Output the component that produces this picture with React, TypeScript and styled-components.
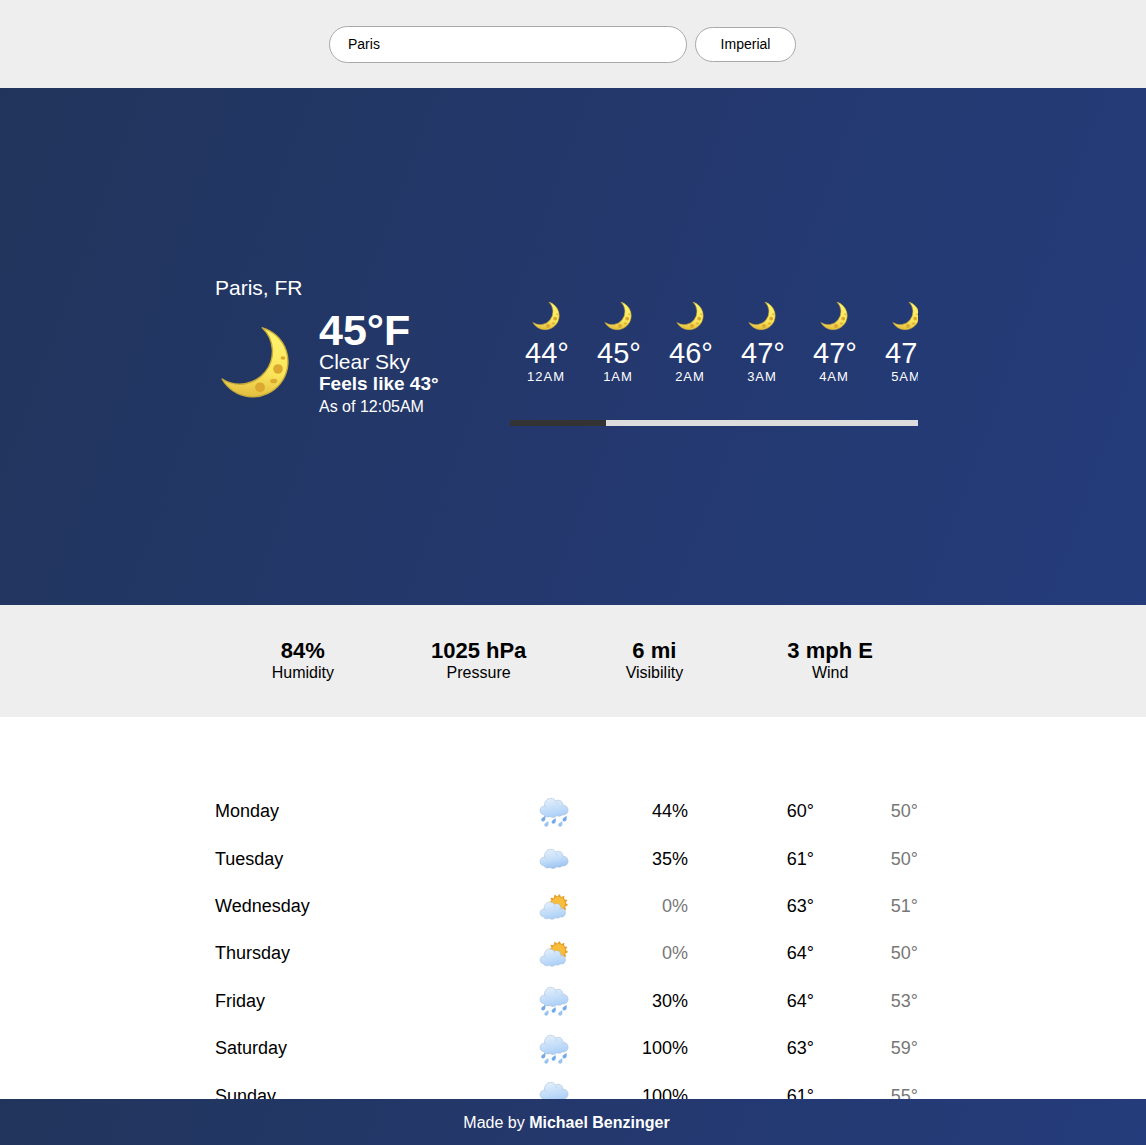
import React, { useState } from "react";
import styled, { createGlobalStyle } from "styled-components";

const GlobalStyle = createGlobalStyle`
  *, *::before, *::after { box-sizing: border-box; }
  body {
    margin: 0;
    font-family: "Liberation Sans", Arial, Helvetica, sans-serif;
    font-size: 16px;
    color: #000;
    background: #fff;
  }
`;

const night = "linear-gradient(110deg, #21355c, #24386d 50%, #243c7b)";
const gutter = "13px";

const Page = styled.div`
  display: flex;
  flex-direction: column;
  height: 100vh;
`;

const Scroll = styled.main`
  flex: 1;
  min-height: 0;
  overflow-y: auto;
  scrollbar-width: none;
`;

const Container = styled.div`
  width: 100%;
  max-width: 703px;
  margin: 0 auto;
`;

const SearchBar = styled.form`
  display: flex;
  justify-content: center;
  align-items: center;
  gap: 8px;
  height: 88px;
  padding-right: 21px;
  background: #eee;
`;

const SearchInput = styled.input`
  width: 358px;
  height: 37px;
  padding: 0 18px;
  border: 1px solid #a9a9a9;
  border-radius: 19px;
  background: #fff;
  color: #000;
  font: inherit;
  font-size: 14px;
`;

const UnitButton = styled.button`
  width: 101px;
  height: 35px;
  padding: 0;
  border: 1px solid #a9a9a9;
  border-radius: 18px;
  background: #fff;
  color: #000;
  font: inherit;
  font-size: 14px;
`;

const Hero = styled.section`
  display: flex;
  align-items: center;
  min-height: 517px;
  padding-right: ${gutter};
  background: ${night};
  color: #fff;
`;

const HeroInner = styled(Container)`
  display: flex;
  justify-content: space-between;
  align-items: center;
`;

const Current = styled.div`
  padding-top: 2px;
`;

const City = styled.h1`
  margin: 0 0 11px;
  font-size: 21px;
  font-weight: 400;
  line-height: 24px;
`;

const Now = styled.div`
  display: flex;
  align-items: center;
  gap: 24px;
`;

const Line = styled.div<{ $size: number; $height: number; $bold?: boolean }>`
  font-size: ${(p) => p.$size}px;
  line-height: ${(p) => p.$height}px;
  font-weight: ${(p) => (p.$bold ? 700 : 400)};
`;

const Hourly = styled.div`
  width: 408px;
`;

const HourList = styled.ul`
  display: flex;
  margin: 0;
  padding: 34px 0 35px;
  list-style: none;
  overflow-x: auto;
  scrollbar-width: none;
`;

const Hour = styled.li`
  flex: 0 0 72px;
  display: flex;
  flex-direction: column;
  align-items: center;
`;

const HourTemp = styled.span`
  margin-top: 4px;
  padding-left: 2px;
  font-size: 29px;
  line-height: 32px;
`;

const HourLabel = styled.span`
  font-size: 13px;
  line-height: 16px;
  letter-spacing: 1px;
`;

const Track = styled.div`
  height: 6px;
  background: #ddd;
`;

const Thumb = styled.div`
  width: 96px;
  height: 6px;
  background: #333;
`;

const Stats = styled.section`
  padding: 34px ${gutter} 34px 0;
  background: #eee;
`;

const StatGrid = styled(Container)`
  display: grid;
  grid-template-columns: repeat(4, 1fr);
  text-align: center;
`;

const StatValue = styled.div`
  font-size: 22px;
  font-weight: 700;
  line-height: 24px;
`;

const StatLabel = styled.div`
  line-height: 20px;
`;

const Forecast = styled.section`
  padding: 71px ${gutter} 72px 0;
`;

const Table = styled.table`
  width: 100%;
  height: 332px;
  table-layout: fixed;
  border-collapse: collapse;
  font-size: 18px;
`;

const Col = styled.col<{ $w?: number }>`
  width: ${(p) => (p.$w ? `${p.$w}px` : "auto")};
`;

const Day = styled.th`
  padding: 0;
  font-weight: 400;
  text-align: left;
`;

const Cell = styled.td<{ $muted?: boolean }>`
  padding: 0;
  text-align: right;
  color: ${(p) => (p.$muted ? "#777" : "#000")};
`;

const Footer = styled.footer`
  flex: none;
  padding: 14px ${gutter} 12px 0;
  line-height: 20px;
  text-align: center;
  color: #fff;
  background: ${night};
`;

const Icon = styled.svg`
  display: block;
  flex: none;
`;

const IconCell = styled(Cell)`
  ${Icon} {
    margin-left: -1px;
  }
`;

function Moon({ size, id }: { size: number; id: string }) {
  return (
    <Icon width={size} height={size} viewBox="0 1 80 80" aria-hidden="true">
      <defs>
        <linearGradient id={id} x1="0.6" y1="0" x2="0.5" y2="1">
          <stop offset="0.2" stopColor="#fff069" />
          <stop offset="0.65" stopColor="#fae45a" />
          <stop offset="1" stopColor="#e3be40" />
        </linearGradient>
      </defs>
      <path
        d="M47.3 3.8A35.2 35.2 0 1 1 7.1 55A32.7 32.7 0 0 0 47.3 3.8Z"
        fill={`url(#${id})`}
        stroke="#c6ab3a"
        strokeWidth="1.4"
        strokeLinejoin="round"
      />
      <g fill="#dba92f">
        <circle cx="63" cy="45" r="4.8" />
        <ellipse cx="68" cy="34" rx="2.4" ry="1.7" />
        <ellipse cx="58.7" cy="57" rx="3.5" ry="2.3" />
        <circle cx="45" cy="63.3" r="4.9" />
      </g>
    </Icon>
  );
}

const cloudPath =
  "M6.4 10.2C6.3 5.8 8.8 2.3 12.6 2.3C15 2.3 16.6 3.3 17.6 5C20.8 3 25 5 24.9 9.2C28 9 30.1 11.3 30.1 14.1C30.1 17.4 27.3 19.6 24.3 18.9C22.8 20.3 20.3 20.5 18.8 19.7C16.8 21.9 13.6 22 12.1 20.4C8.9 21.6 6.6 20.6 6 18.8C3.6 18.5 2 16.8 2 14.4C2 11.8 3.9 10.1 6.4 10.2Z";

const drops = [
  [5.3, 22.7],
  [15.7, 25],
  [26.6, 22.7],
  [8.4, 28],
  [22.3, 28],
];

const rays = Array.from({ length: 24 }, (_, i) => {
  const r = i % 2 ? 7.4 : 10;
  const a = ((i + 0.5) * Math.PI) / 12;
  return `${(20.3 + r * Math.cos(a)).toFixed(2)},${(12.8 + r * Math.sin(a)).toFixed(2)}`;
}).join(" ");

type Sky = "rain" | "cloud" | "partly";

function SkyIcon({ kind, id }: { kind: Sky; id: string }) {
  const place = {
    rain: undefined,
    cloud: "translate(0 4)",
    partly: "translate(0.2 8.8) scale(0.91)",
  }[kind];
  return (
    <Icon width="32" height="32" viewBox="0 0 32 32" role="img" aria-label={kind}>
      <defs>
        <linearGradient id={id} x1="0.3" y1="0" x2="0.6" y2="1">
          <stop offset="0" stopColor="#e3effb" />
          <stop offset="0.5" stopColor="#c6dff9" />
          <stop offset="1" stopColor={kind === "cloud" ? "#97c2f3" : "#a9cef7"} />
        </linearGradient>
      </defs>
      {kind === "partly" && (
        <>
          <polygon points={rays} fill="#e5a22c" />
          <circle cx="20.3" cy="12.8" r="6.8" fill="#f8bd3a" />
        </>
      )}
      <g transform={place} fill="none" stroke="#a3b9d2" strokeWidth="0.5">
        <path d={cloudPath} fill={`url(#${id})`} />
        <path
          d="M17.6 5.3C18.4 6.3 18.7 7.3 18.7 8.3M6.4 10.5C7.5 10.6 8.3 11 8.9 11.6M24.9 9.4C24.6 10.3 24.2 10.9 23.6 11.5"
          strokeOpacity="0.6"
        />
      </g>
      {kind === "rain" &&
        drops.map(([x, y], i) => (
          <path
            key={x}
            transform={`translate(${x} ${y})`}
            d="M1.8 -2.9C2.4 -0.8 2.4 2.8 -0.1 2.8C-1.7 2.8 -2.3 1.5 -2 0.3C-1.6 -0.9 0.4 -1.5 1.8 -2.9Z"
            fill={i < 3 ? "#76aae6" : "#9bc3ef"}
          />
        ))}
    </Icon>
  );
}

const hours = [
  ["44°", "12AM"],
  ["45°", "1AM"],
  ["46°", "2AM"],
  ["47°", "3AM"],
  ["47°", "4AM"],
  ["47°", "5AM"],
];

const stats = [
  ["84%", "Humidity"],
  ["1025 hPa", "Pressure"],
  ["6 mi", "Visibility"],
  ["3 mph E", "Wind"],
];

const week: [string, Sky, number, string, string][] = [
  ["Monday", "rain", 44, "60°", "50°"],
  ["Tuesday", "cloud", 35, "61°", "50°"],
  ["Wednesday", "partly", 0, "63°", "51°"],
  ["Thursday", "partly", 0, "64°", "50°"],
  ["Friday", "rain", 30, "64°", "53°"],
  ["Saturday", "rain", 100, "63°", "59°"],
  ["Sunday", "rain", 100, "61°", "55°"],
];

export default function App() {
  const [city, setCity] = useState("Paris");
  return (
    <Page>
      <GlobalStyle />
      <Scroll>
        <SearchBar onSubmit={(e) => e.preventDefault()}>
          <SearchInput
            aria-label="City"
            value={city}
            onChange={(e) => setCity(e.target.value)}
          />
          <UnitButton type="button">Imperial</UnitButton>
        </SearchBar>
        <Hero>
          <HeroInner>
            <Current>
              <City>Paris, FR</City>
              <Now>
                <Moon size={80} id="moon-now" />
                <div>
                  <Line $size={43} $height={39} $bold>45°F</Line>
                  <Line $size={21} $height={23}>Clear Sky</Line>
                  <Line $size={19} $height={22} $bold>Feels like 43°</Line>
                  <Line $size={16} $height={24}>As of 12:05AM</Line>
                </div>
              </Now>
            </Current>
            <Hourly>
              <HourList>
                {hours.map(([temp, label]) => (
                  <Hour key={label}>
                    <Moon size={32} id={`moon-${label}`} />
                    <HourTemp>{temp}</HourTemp>
                    <HourLabel>{label}</HourLabel>
                  </Hour>
                ))}
              </HourList>
              <Track>
                <Thumb />
              </Track>
            </Hourly>
          </HeroInner>
        </Hero>
        <Stats>
          <StatGrid>
            {stats.map(([value, label]) => (
              <div key={label}>
                <StatValue>{value}</StatValue>
                <StatLabel>{label}</StatLabel>
              </div>
            ))}
          </StatGrid>
        </Stats>
        <Forecast>
          <Container>
            <Table>
              <colgroup>
                <Col />
                <Col $w={30} />
                <Col $w={119} />
                <Col $w={126} />
                <Col $w={104} />
              </colgroup>
              <tbody>
                {week.map(([day, sky, rain, high, low]) => (
                  <tr key={day}>
                    <Day scope="row">{day}</Day>
                    <IconCell>
                      <SkyIcon kind={sky} id={`sky-${day}`} />
                    </IconCell>
                    <Cell $muted={rain === 0}>{rain}%</Cell>
                    <Cell>{high}</Cell>
                    <Cell $muted>{low}</Cell>
                  </tr>
                ))}
              </tbody>
            </Table>
          </Container>
        </Forecast>
      </Scroll>
      <Footer>
        Made by <strong>Michael Benzinger</strong>
      </Footer>
    </Page>
  );
}
